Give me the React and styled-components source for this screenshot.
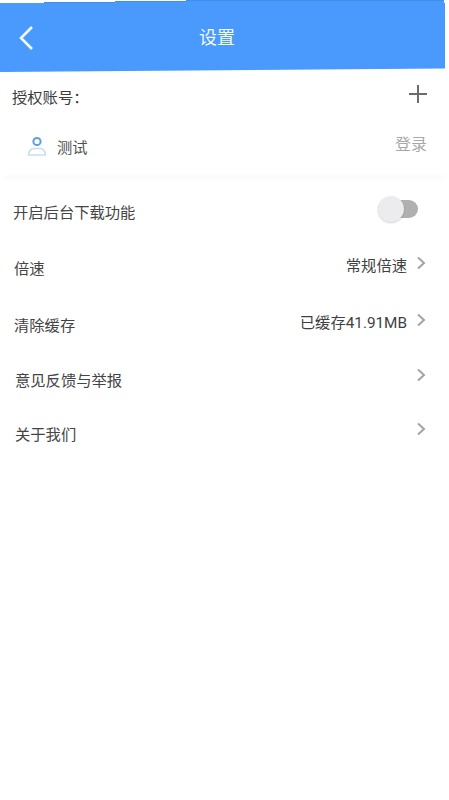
import React from "react";
import styled, { createGlobalStyle } from "styled-components";

const GlobalStyle = createGlobalStyle`
	html, body {
		margin: 0;
		padding: 0;
		background: #ffffff;
	}
	body {
		font-family: "Roboto", "Noto Sans CJK SC", sans-serif;
	}
`;

const Page = styled.div`
	width: 449px;
	height: 800px;
	overflow: hidden;
	background: #ffffff;
	display: flex;
	flex-direction: column;
`;

const TopStrip = styled.div`
	height: 3px;
	width: 444px;
	display: flex;
	align-items: flex-end;
`;

const StripStep = styled.div`
	height: ${(p) => p.$height}px;
	flex: ${(p) => p.$grow} 0 0;
	background: #4a9afd;
	border-top: ${(p) => (p.$height > 0 ? "1px solid #3f8fe8" : "none")};
	box-sizing: border-box;
`;

const Header = styled.header`
	width: 445px;
	height: 69px;
	background: #4a9afd;
	clip-path: polygon(0 0, 100% 0, 100% 65.5px, 0 69px);
	display: flex;
	align-items: center;
	position: relative;
	padding-left: 18px;
	box-sizing: border-box;
`;

const HeaderTitle = styled.h1`
	position: absolute;
	left: 0;
	right: 11px;
	margin: 0;
	text-align: center;
	color: #f4f9ff;
	font-size: 18px;
	font-weight: 400;
	line-height: 24px;
	top: 23px;
`;

const AccountSection = styled.section`
	height: 100px;
	padding: 0 22px 0 12px;
	display: flex;
	flex-direction: column;
`;

const AccountHead = styled.div`
	display: flex;
	justify-content: space-between;
	align-items: center;
	height: 48px;
	color: #3c3c3c;
	font-size: 15.3px;
`;

const AccountRow = styled.div`
	display: flex;
	align-items: center;
	height: 52px;
	padding-left: 15px;
	color: #505050;
	font-size: 15.3px;
	gap: 10px;
`;

const LoginText = styled.span`
	margin-left: auto;
	color: #a9a9a9;
	font-size: 16px;
	position: relative;
	top: -3px;
`;

const Divider = styled.div`
	height: 12px;
	margin: 0 4px;
	background: linear-gradient(#ffffff, #fafcfe 50%, #ffffff);
`;

const List = styled.div`
	display: flex;
	flex-direction: column;
	padding-top: 1px;
`;

const Row = styled.div`
	height: ${(p) => p.$height || 55}px;
	display: flex;
	align-items: center;
	padding: 0 23px 0 ${(p) => p.$inset || 14}px;
	color: #444444;
	font-size: 15.3px;
`;

const Value = styled.span`
	margin-left: auto;
	color: #3f3f3f;
	font-size: 15.3px;
	margin-right: 9px;
	position: relative;
	top: -3px;
`;

const Switch = styled.div`
	margin-left: auto;
	margin-right: 8px;
	position: relative;
	top: -2px;
	width: 40px;
	height: 18px;
	border-radius: 9px;
	background: #b0b0b0;
`;

const Knob = styled.div`
	position: absolute;
	left: 0;
	top: -4px;
	width: 26px;
	height: 26px;
	border-radius: 50%;
	background: #ececee;
	box-shadow: 0 1px 2px rgba(0, 0, 0, 0.18);
`;

const BackIcon = () => (
	<svg width="16" height="26" viewBox="0 0 16 26" fill="none">
		<path d="M14 2 L3 13 L14 24" stroke="#f4f9ff" strokeWidth="2.6" />
	</svg>
);

const PlusIcon = () => (
	<svg width="20" height="20" viewBox="0 0 20 20" style={{ marginTop: -4, marginRight: -1 }}>
		<path d="M10 1 V19 M1 10 H19" stroke="#6c6c6c" strokeWidth="2" />
	</svg>
);

const UserIcon = () => (
	<svg width="20" height="20" viewBox="0 0 20 20" fill="none">
		<circle cx="10" cy="5.5" r="3.6" stroke="#5b9fe6" strokeWidth="2" />
		<path d="M1.5 19 C1.5 14.5 4.5 12.5 7 12.5 H13 C15.5 12.5 18.5 14.5 18.5 19 Z" stroke="#c6def5" strokeWidth="1.6" />
	</svg>
);

const Chevron = () => (
	<svg width="10" height="14" viewBox="0 0 10 14" fill="none" style={{ position: "relative", top: -4 }}>
		<path d="M2 1.5 L8 7 L2 12.5" stroke="#a3a3a3" strokeWidth="2" />
	</svg>
);

const App = () => {
	return (
		<Page>
			<GlobalStyle />
			<TopStrip>
				<StripStep $height={0} $grow={44} />
				<StripStep $height={1} $grow={71} />
				<StripStep $height={2} $grow={71} />
				<StripStep $height={3} $grow={258} />
			</TopStrip>
			<Header>
				<BackIcon />
				<HeaderTitle>设置</HeaderTitle>
			</Header>
			<AccountSection>
				<AccountHead>
					<span>授权账号：</span>
					<PlusIcon />
				</AccountHead>
				<AccountRow>
					<UserIcon />
					<span>测试</span>
					<LoginText>登录</LoginText>
				</AccountRow>
			</AccountSection>
			<Divider />
			<List>
				<Row $height={52} $inset={13}>
					<span>开启后台下载功能</span>
					<Switch>
						<Knob />
					</Switch>
				</Row>
				<Row $height={60}>
					<span>倍速</span>
					<Value>常规倍速</Value>
					<Chevron />
				</Row>
				<Row $height={54}>
					<span>清除缓存</span>
					<Value>已缓存41.91MB</Value>
					<Chevron />
				</Row>
				<Row $height={56} $inset={15}>
					<span>意见反馈与举报</span>
					<Value />
					<Chevron />
				</Row>
				<Row $height={52} $inset={15}>
					<span>关于我们</span>
					<Value />
					<Chevron />
				</Row>
			</List>
		</Page>
	);
};

export default App;
